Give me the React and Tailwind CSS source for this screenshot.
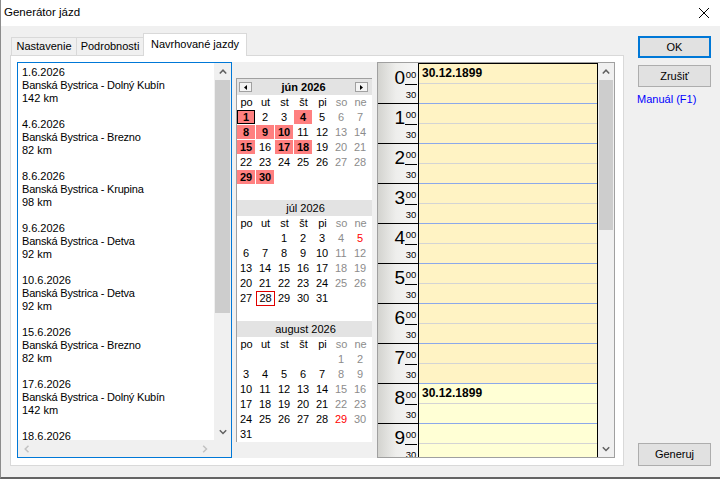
import React from "react";

const trips = [
  ["1.6.2026", "Banská Bystrica - Dolný Kubín", "142 km"],
  ["4.6.2026", "Banská Bystrica - Brezno", "82 km"],
  ["8.6.2026", "Banská Bystrica - Krupina", "98 km"],
  ["9.6.2026", "Banská Bystrica - Detva", "92 km"],
  ["10.6.2026", "Banská Bystrica - Detva", "92 km"],
  ["15.6.2026", "Banská Bystrica - Brezno", "82 km"],
  ["17.6.2026", "Banská Bystrica - Dolný Kubín", "142 km"],
  ["18.6.2026"],
];

const dayNames = ["po", "ut", "st", "št", "pi", "so", "ne"];

const months = [
  { name: "jún 2026", bold: true, offset: 0, days: 30, marked: [1, 4, 8, 9, 10, 15, 17, 18, 29, 30], focus: 1, red: [], today: null, nav: true },
  { name: "júl 2026", bold: false, offset: 2, days: 31, marked: [], focus: null, red: [5], today: 28, nav: false },
  { name: "august 2026", bold: false, offset: 5, days: 31, marked: [], focus: null, red: [29], today: null, nav: false },
];

function Chevron({ dir, color = "#606060" }) {
  if (dir === "up" || dir === "down") {
    const pts = dir === "up" ? "0.8,4.5 4,1.2 7.2,4.5" : "0.8,1.2 4,4.5 7.2,1.2";
    return (
      <svg width="8" height="6" viewBox="0 0 8 6">
        <polyline points={pts} fill="none" stroke={color} strokeWidth="1.5" />
      </svg>
    );
  }
  const pts = dir === "left" ? "4.5,0.8 1.2,4 4.5,7.2" : "1.2,0.8 4.5,4 1.2,7.2";
  return (
    <svg width="6" height="8" viewBox="0 0 6 8">
      <polyline points={pts} fill="none" stroke={color} strokeWidth="1.5" />
    </svg>
  );
}

function NavButton({ dir }) {
  return (
    <div className="w-[13px] h-[10px] border border-[#a0a0a0] bg-[#f4f4f4] flex items-center justify-center">
      <svg width="3" height="5" viewBox="0 0 3 5">
        {dir === "left" ? <polygon points="3,0 0,2.5 3,5" fill="#000" /> : <polygon points="0,0 3,2.5 0,5" fill="#000" />}
      </svg>
    </div>
  );
}

function Month({ m }) {
  const cells = [];
  for (let i = 0; i < 42; i++) {
    const d = i - m.offset + 1;
    cells.push(d >= 1 && d <= m.days ? d : null);
  }
  return (
    <div className="h-[121px]">
      <div className="h-[16px] bg-[#e3e3e3] flex items-center">
        {m.nav ? (
          <>
            <div className="ml-[2px]"><NavButton dir="left" /></div>
            <div className="flex-1 text-center font-bold leading-none">{m.name}</div>
            <div className="mr-[4px]"><NavButton dir="right" /></div>
          </>
        ) : (
          <div className="flex-1 text-center leading-none pl-[2px]">{m.name}</div>
        )}
      </div>
      <div className="grid grid-cols-[repeat(7,19px)]">
        {dayNames.map((n, i) => (
          <div key={n} className={`h-[15px] flex items-center justify-center leading-none ${i >= 5 ? "text-[#8c8c8c]" : ""}`}>
            {n}
          </div>
        ))}
        {cells.map((d, i) => {
          const col = i % 7;
          if (d === null) return <div key={i} className="h-[15px]" />;
          const marked = m.marked.includes(d);
          const focus = m.focus === d;
          const red = m.red.includes(d);
          const today = m.today === d;
          let color = "text-black";
          if (red) color = "text-[#ff0000]";
          else if (col >= 5 && !marked) color = "text-[#8c8c8c]";
          if (today) {
            return (
              <div key={i} className="h-[15px]">
                <div className={`w-[19px] h-[15px] border border-[#e00000] flex items-center justify-center leading-none ${color}`}>{d}</div>
              </div>
            );
          }
          return (
            <div key={i} className="h-[15px]">
              <div
                className={`w-[18px] h-[14px] flex items-center justify-center leading-none ${color} ${marked ? "bg-[#ff8080] font-bold" : ""} ${focus ? "border border-black" : ""}`}
              >
                {d}
              </div>
            </div>
          );
        })}
      </div>
    </div>
  );
}

function TripList() {
  return (
    <div className="w-[215px] h-[396px] border border-[#0078d7] flex flex-col shrink-0">
      <div className="flex flex-1 min-h-0">
        <div className="flex-1 overflow-hidden pl-[4px] pt-[3px] text-[11px] leading-[13px] bg-white">
          {trips.map((t, i) => (
            <div key={i} className="h-[52px]">
              <div>{t[0]}</div>
              {t[1] && <div className="tracking-[-0.2px]">{t[1]}</div>}
              {t[2] && <div>{t[2]}</div>}
            </div>
          ))}
        </div>
        <div className="w-[17px] bg-[#f0f0f0] flex flex-col">
          <div className="h-[17px] flex items-center justify-center"><Chevron dir="up" /></div>
          <div className="mx-px h-[233px] bg-[#cdcdcd]" />
          <div className="flex-1" />
          <div className="h-[17px] flex items-center justify-center"><Chevron dir="down" /></div>
        </div>
      </div>
      <div className="h-[17px] flex">
        <div className="flex-1 bg-[#f0f0f0] flex items-center justify-between px-[6px]">
          <Chevron dir="left" color="#c2c2c2" />
          <Chevron dir="right" color="#c2c2c2" />
        </div>
        <div className="w-[17px] bg-[#f0f0f0]" />
      </div>
    </div>
  );
}

function Schedule() {
  const hours = Array.from({ length: 10 }, (_, i) => i);
  const rows = Array.from({ length: 20 }, (_, i) => i);
  return (
    <div className="w-[238px] h-[396px] border border-[#a0a0a0] flex bg-white shrink-0">
      <div className="w-[40px] h-full overflow-hidden pt-px bg-[linear-gradient(to_right,#d3d3cf,#eeeeec_45%,#f7f7f7)]">
        {hours.map((h) => (
          <div key={h} className="h-[40px] border-b border-black">
            <div className="h-[21px] flex justify-end pr-px">
              <span className="text-[19px] leading-none mt-[4px]">{h}</span>
              <div className="w-[12px] h-[21px] border-b border-black text-[9.5px] leading-none pt-[6px] text-center">00</div>
            </div>
            <div className="h-[18px] flex justify-end pr-px">
              <div className="w-[12px] text-[9.5px] leading-none pt-[5px] text-center">30</div>
            </div>
          </div>
        ))}
      </div>
      <div className="w-px bg-black" />
      <div className="w-[179px] h-full border-t border-r border-black overflow-hidden">
        {rows.map((r) => {
          const hour = Math.floor(r / 2);
          const half = r % 2 === 1;
          const bg = hour < 8 ? "bg-[#fff3c4]" : "bg-[#ffffd5]";
          const line = half ? "border-[#8ca8ea]" : "border-[#d4d4d4]";
          const label = !half && (hour === 0 || hour === 8);
          return (
            <div key={r} className={`h-[20px] border-b ${line} ${bg} pl-[3px]`}>
              {label && <div className="text-[12px] font-bold leading-[18px]">30.12.1899</div>}
            </div>
          );
        })}
      </div>
      <div className="w-[16px] bg-[#f0f0f0] flex flex-col">
        <div className="h-[17px] flex items-center justify-center"><Chevron dir="up" /></div>
        <div className="mx-px h-[150px] bg-[#cdcdcd]" />
        <div className="flex-1" />
        <div className="h-[17px] flex items-center justify-center"><Chevron dir="down" /></div>
      </div>
    </div>
  );
}

export default function App() {
  return (
    <div className="w-[720px] h-[479px] bg-[#f0f0f0] border-l border-l-[#8c8c8c] border-b-2 border-b-[#646464] overflow-hidden flex flex-col font-['Liberation_Sans',Arial,sans-serif] text-black">
      <div className="h-[26px] bg-white flex items-center justify-between pl-[3px] pr-[11px] shrink-0">
        <span className="text-[11.5px]">Generátor jázd</span>
        <svg width="10" height="10" viewBox="0 0 10 10">
          <line x1="0" y1="0" x2="10" y2="10" stroke="#000" strokeWidth="1" />
          <line x1="10" y1="0" x2="0" y2="10" stroke="#000" strokeWidth="1" />
        </svg>
      </div>
      <div className="flex flex-1 min-h-0 pl-[9px]">
        <div className="w-[614px] flex flex-col pt-[7px]">
          <div className="flex items-end h-[22px] pl-[1px] text-[11px]">
            <div className="w-[66px] h-[18px] border border-b-0 border-[#d9d9d9] bg-[#f0f0f0] flex items-center justify-center">Nastavenie</div>
            <div className="-ml-px w-[68px] h-[18px] border border-b-0 border-[#d9d9d9] bg-[#f0f0f0] flex items-center justify-center">Podrobnosti</div>
            <div className="-ml-px -mb-px relative z-10 w-[104px] h-[23px] border border-b-0 border-[#d9d9d9] bg-white flex items-center justify-center pb-[2px]">Navrhované jazdy</div>
          </div>
          <div className="h-[411px] border border-[#d9d9d9] bg-white pl-[6px] pt-[6px] flex items-start">
            <TripList />
            <div className="w-[145px] h-[396px] bg-[#f0f0f0] pl-[4px] pt-[16px] shrink-0">
              <div className="w-[136px] h-[364px] bg-white border-l border-t border-[#a0a0a0] text-[11px]">
                {months.map((m) => (
                  <Month key={m.name} m={m} />
                ))}
              </div>
            </div>
            <Schedule />
          </div>
        </div>
        <div className="ml-[14px] w-[73px] flex flex-col pt-[10px] pb-[11px] text-[11px]">
          <div className="h-[22px] border-2 border-[#0078d7] bg-[#e1e1e1] flex items-center justify-center">OK</div>
          <div className="mt-[7px] h-[22px] border border-[#adadad] bg-[#e1e1e1] flex items-center justify-center">Zrušiť</div>
          <div className="mt-[5px] leading-[14px] text-[#0000ff] -ml-[1px]">Manuál (F1)</div>
          <div className="mt-auto h-[23px] border border-[#adadad] bg-[#e1e1e1] flex items-center justify-center">Generuj</div>
        </div>
      </div>
    </div>
  );
}
